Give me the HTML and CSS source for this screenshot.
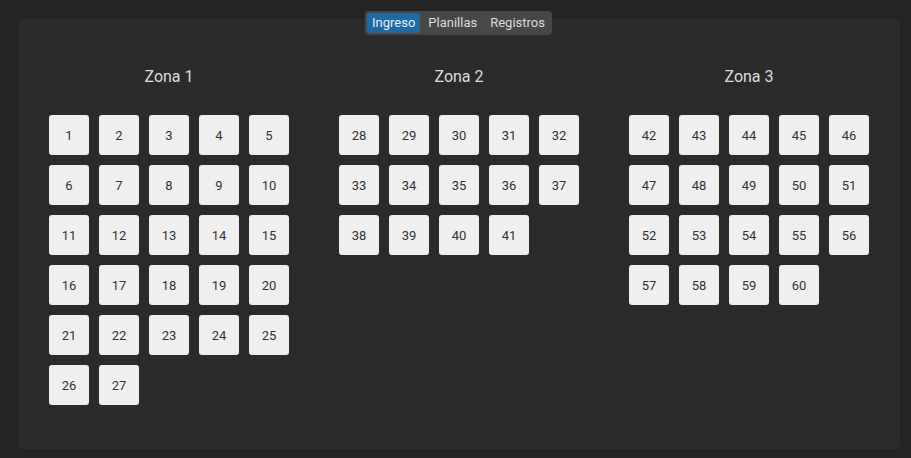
FILE: index.html
```html
<!DOCTYPE html>
<html lang="es">
<head>
<meta charset="utf-8">
<title>Ingreso</title>
<link rel="stylesheet" href="styles.css">
</head>
<body>
<div class="panel">
  <nav class="tabs">
    <span class="tab active">Ingreso</span>
    <span class="tab">Planillas</span>
    <span class="tab">Registros</span>
  </nav>
  <div class="zones">
    <section class="zone">
      <h2 class="zone-title">Zona 1</h2>
      <div class="grid">
        <div class="cell">1</div><div class="cell">2</div><div class="cell">3</div><div class="cell">4</div><div class="cell">5</div>
        <div class="cell">6</div><div class="cell">7</div><div class="cell">8</div><div class="cell">9</div><div class="cell">10</div>
        <div class="cell">11</div><div class="cell">12</div><div class="cell">13</div><div class="cell">14</div><div class="cell">15</div>
        <div class="cell">16</div><div class="cell">17</div><div class="cell">18</div><div class="cell">19</div><div class="cell">20</div>
        <div class="cell">21</div><div class="cell">22</div><div class="cell">23</div><div class="cell">24</div><div class="cell">25</div>
        <div class="cell">26</div><div class="cell">27</div>
      </div>
    </section>
    <section class="zone">
      <h2 class="zone-title">Zona 2</h2>
      <div class="grid">
        <div class="cell">28</div><div class="cell">29</div><div class="cell">30</div><div class="cell">31</div><div class="cell">32</div>
        <div class="cell">33</div><div class="cell">34</div><div class="cell">35</div><div class="cell">36</div><div class="cell">37</div>
        <div class="cell">38</div><div class="cell">39</div><div class="cell">40</div><div class="cell">41</div>
      </div>
    </section>
    <section class="zone">
      <h2 class="zone-title">Zona 3</h2>
      <div class="grid">
        <div class="cell">42</div><div class="cell">43</div><div class="cell">44</div><div class="cell">45</div><div class="cell">46</div>
        <div class="cell">47</div><div class="cell">48</div><div class="cell">49</div><div class="cell">50</div><div class="cell">51</div>
        <div class="cell">52</div><div class="cell">53</div><div class="cell">54</div><div class="cell">55</div><div class="cell">56</div>
        <div class="cell">57</div><div class="cell">58</div><div class="cell">59</div><div class="cell">60</div>
      </div>
    </section>
  </div>
</div>
</body>
</html>
```
FILE: styles.css
```css
html, body {
  margin: 0;
  padding: 0;
  background: #232323;
  font-family: Roboto, "Liberation Sans", sans-serif;
}

body {
  padding: 18px 11px 9px 18px;
  height: 458px;
  box-sizing: border-box;
}

.panel {
  position: relative;
  background: #2b2b2b;
  border-radius: 6px;
  height: 431px;
  box-sizing: border-box;
  padding-top: 49px;
}

.tabs {
  position: absolute;
  top: -7px;
  left: 347px;
  display: flex;
  gap: 0;
  padding: 2px;
  background: #474747;
  border-radius: 4px;
}

.tab {
  display: block;
  height: 20px;
  line-height: 20px;
  padding: 0 5px;
  font-size: 13px;
  color: #dcdcdc;
  border-radius: 3px;
}

.tab.active {
  background: #1f6aa5;
  color: #e8eef5;
}

.tab + .tab {
  margin-left: 3px;
}

.zones {
  display: flex;
  justify-content: center;
  gap: 50px;
}

.zone {
  width: 240px;
}

.zone-title {
  margin: 0 0 28px;
  height: 20px;
  line-height: 20px;
  text-align: center;
  font-size: 16px;
  font-weight: 400;
  color: #dcdcdc;
}

.grid {
  display: grid;
  grid-template-columns: repeat(5, 40px);
  grid-auto-rows: 40px;
  gap: 10px;
}

.cell {
  background: #efefef;
  border-radius: 3px;
  display: flex;
  align-items: center;
  justify-content: center;
  font-size: 13px;
  color: #333;
}
```
